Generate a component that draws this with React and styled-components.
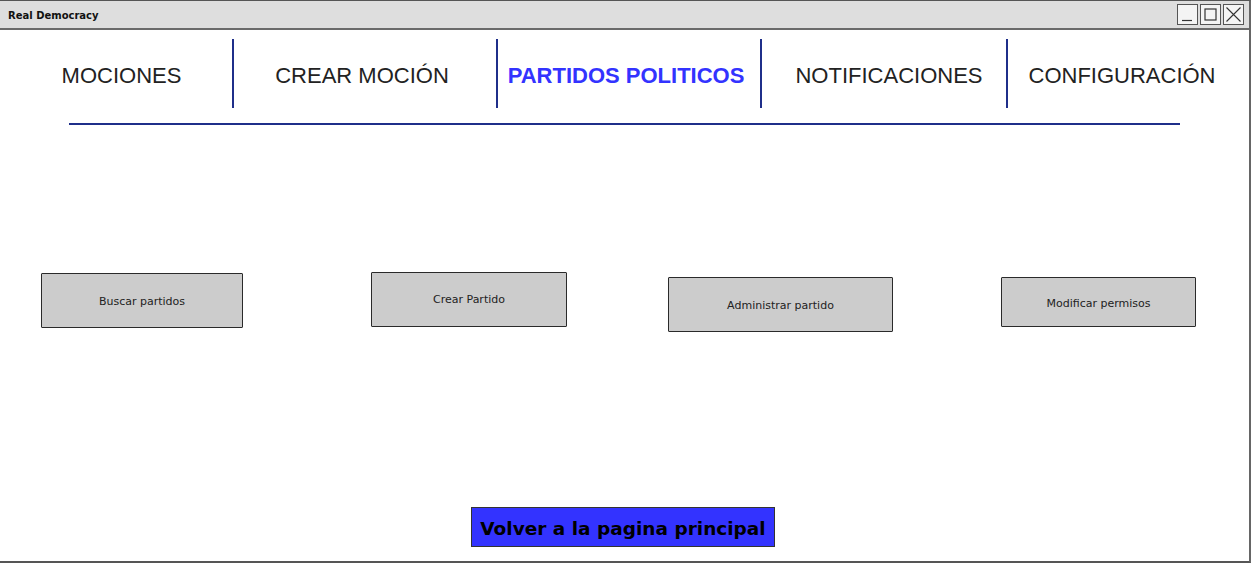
import React from "react";
import styled, { createGlobalStyle } from "styled-components";

const Global = createGlobalStyle`
  html, body { margin: 0; padding: 0; background: #fff; }
  body { width: 1251px; height: 563px; overflow: hidden; }
`;

const sketchFont = `"Comic Sans MS", "DejaVu Sans", sans-serif`;

const Window = styled.div`
  box-sizing: border-box;
  width: 1251px;
  height: 563px;
  border-top: 1px solid #555;
  border-right: 2px solid #666;
  border-bottom: 2px solid #555;
  display: flex;
  flex-direction: column;
  background: #fff;
`;

const TitleBar = styled.div`
  height: 27px;
  background: #dedede;
  border-bottom: 2px solid #6a6a6a;
  display: flex;
  align-items: center;
  justify-content: space-between;
  padding: 0 5px 0 8px;
`;

const Title = styled.span`
  font-family: ${sketchFont};
  font-weight: bold;
  font-size: 10px;
  color: #111;
  margin-top: 2px;
`;

const WinButtons = styled.div`
  display: flex;
  gap: 2px;
`;

const WinButton = styled.div`
  box-sizing: border-box;
  width: 21px;
  height: 21px;
  border: 1px solid #555;
  background: #f4f4f4;
  display: flex;
  align-items: center;
  justify-content: center;
`;

const Nav = styled.nav`
  display: flex;
  margin: 9px 0 0 11px;
  height: 69px;
`;

const Tab = styled.div`
  box-sizing: border-box;
  width: ${(p) => p.$w}px;
  border-left: ${(p) => (p.$sep ? "2px solid #1f2f8a" : "none")};
  display: flex;
  align-items: center;
  justify-content: center;
  padding-top: 5px;
  padding-left: ${(p) => Math.max(0, p.$dx || 0) * 2}px;
  padding-right: ${(p) => Math.max(0, -(p.$dx || 0)) * 2}px;
  font-family: "Liberation Sans", Arial, sans-serif;
  font-size: 22px;
  font-weight: ${(p) => (p.$active ? "bold" : "normal")};
  color: ${(p) => (p.$active ? "#3333ff" : "#222")};
  white-space: nowrap;
`;

const Underline = styled.div`
  margin: 15px 0 0 69px;
  width: 1111px;
  height: 2px;
  background: #1f2f8a;
`;

const ActionRow = styled.div`
  display: flex;
  align-items: flex-start;
  margin-top: 147px;
`;

const ActionButton = styled.div`
  box-sizing: border-box;
  margin-left: ${(p) => p.$ml}px;
  margin-top: ${(p) => p.$mt}px;
  width: ${(p) => p.$w}px;
  height: ${(p) => p.$h}px;
  background: #cccccc;
  border: 1px solid #2a2a2a;
  border-radius: 1px;
  display: flex;
  align-items: center;
  justify-content: center;
  font-family: ${sketchFont};
  font-size: 11px;
  color: #222;
  padding-top: ${(p) => p.$pt || 0}px;
`;

const Footer = styled.div`
  margin-top: auto;
  padding-bottom: 14px;
  display: flex;
  justify-content: center;
  padding-right: 3px;
`;

const HomeButton = styled.div`
  box-sizing: border-box;
  width: 304px;
  height: 40px;
  background: #3333ff;
  border: 1px solid #333;
  display: flex;
  align-items: center;
  justify-content: center;
  font-family: ${sketchFont};
  font-weight: bold;
  font-size: 18.5px;
  color: #000;
  white-space: nowrap;
  padding-top: 2px;
`;

const tabs = [
  { label: "MOCIONES", w: 221, dx: 0 },
  { label: "CREAR MOCIÓN", w: 264, dx: -3 },
  { label: "PARTIDOS POLITICOS", w: 264, dx: -3, active: true },
  { label: "NOTIFICACIONES", w: 246, dx: 5 },
  { label: "CONFIGURACIÓN", w: 230, dx: 0 },
];

const actions = [
  { label: "Buscar partidos", ml: 41, mt: 1, w: 202, h: 55, pt: 2 },
  { label: "Crear Partido", ml: 128, mt: 0, w: 196, h: 55, pt: 0 },
  { label: "Administrar partido", ml: 101, mt: 5, w: 225, h: 55, pt: 2 },
  { label: "Modificar permisos", ml: 108, mt: 5, w: 195, h: 50, pt: 2 },
];

export default function App() {
  return (
    <>
      <Global />
      <Window>
        <TitleBar>
          <Title>Real Democracy</Title>
          <WinButtons>
            <WinButton>
              <svg width="19" height="19" viewBox="0 0 19 19">
                <path d="M4 15.5 H14" stroke="#333" strokeWidth="1.2" fill="none" />
              </svg>
            </WinButton>
            <WinButton>
              <svg width="19" height="19" viewBox="0 0 19 19">
                <rect x="4" y="4" width="11" height="11" stroke="#333" strokeWidth="1.2" fill="none" />
              </svg>
            </WinButton>
            <WinButton>
              <svg width="19" height="19" viewBox="0 0 19 19">
                <path d="M2.5 2.5 L16.5 16.5 M16.5 2.5 L2.5 16.5" stroke="#333" strokeWidth="1.1" fill="none" />
              </svg>
            </WinButton>
          </WinButtons>
        </TitleBar>
        <Nav>
          {tabs.map((t, i) => (
            <Tab key={t.label} $w={t.w} $sep={i > 0} $active={t.active} $dx={t.dx}>
              {t.label}
            </Tab>
          ))}
        </Nav>
        <Underline />
        <ActionRow>
          {actions.map((a) => (
            <ActionButton key={a.label} $ml={a.ml} $mt={a.mt} $w={a.w} $h={a.h} $pt={a.pt}>
              {a.label}
            </ActionButton>
          ))}
        </ActionRow>
        <Footer>
          <HomeButton>Volver a la pagina principal</HomeButton>
        </Footer>
      </Window>
    </>
  );
}
